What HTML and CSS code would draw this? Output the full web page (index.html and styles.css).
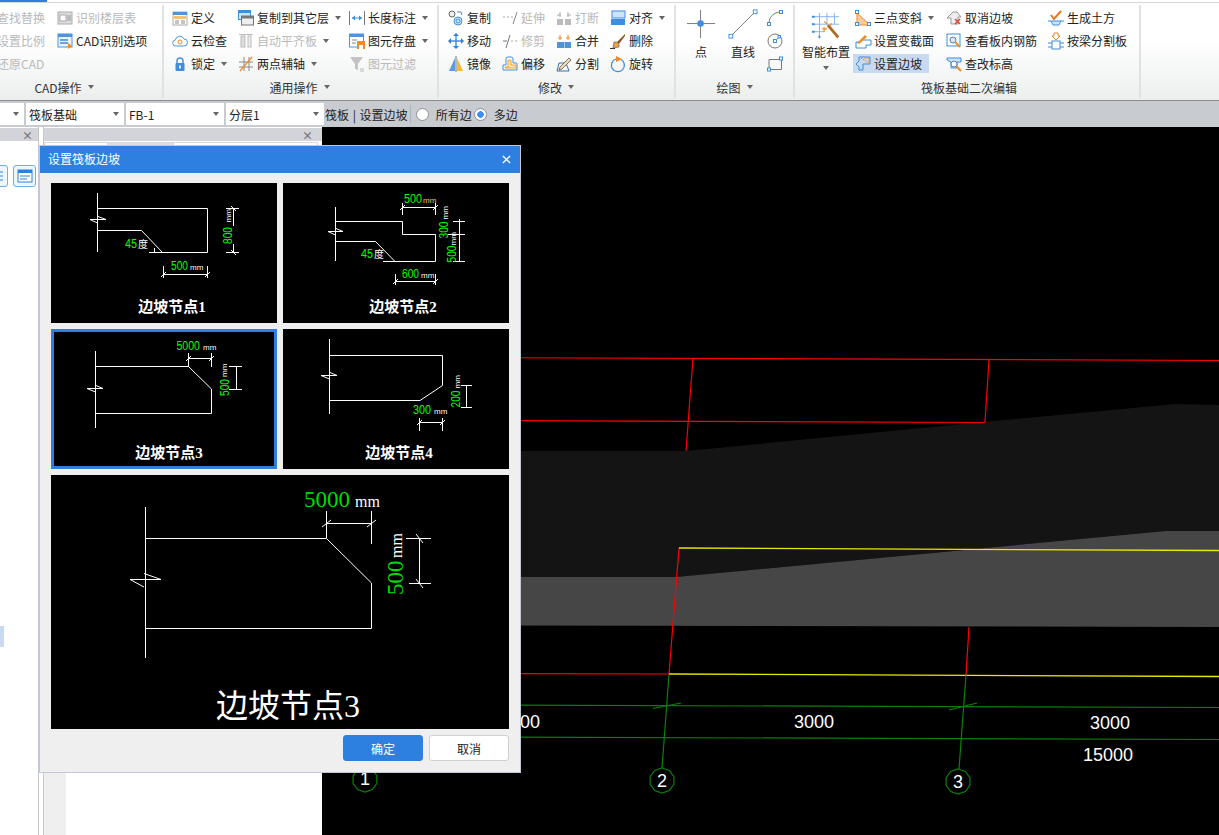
FILE: index.html
```html
<!DOCTYPE html>
<html lang="zh-CN">

<head>
    <meta charset="UTF-8">
    <title>设置筏板边坡</title>
    <link rel="stylesheet" href="styles.css">
</head>

<body>
    <!-- 功能区 -->
    <div class="ribbon">
        <div class="ribbon-top"><span class="ribbon-tab-mark"></span></div>
        <div class="ribbon-groups">
            <div class="group group-cad">
                <div class="group-body">
                    <div class="col col-cad1">
                        <div class="item off"><span class="ic"></span>查找替换</div>
                        <div class="item off"><span class="ic"></span>设置比例</div>
                        <div class="item off"><span class="ic"></span>还原CAD</div>
                    </div>
                    <div class="col">
                        <div class="item off">
                            <svg class="ic" viewBox="0 0 16 16"><rect x="1" y="2" width="14" height="12" fill="#ddd" stroke="#aaa"/><rect x="3" y="5" width="6" height="6" fill="#fff" stroke="#aaa"/><path d="M10 6h4M10 8h4M10 10h4" stroke="#999"/></svg>识别楼层表
                        </div>
                        <div class="item">
                            <svg class="ic" viewBox="0 0 16 16"><rect x="1" y="1" width="14" height="13" fill="#e9f2fb" stroke="#4d94dc"/><rect x="1" y="1" width="14" height="3" fill="#4d94dc"/><path d="M3 7h8M3 10h8" stroke="#6aa5e0" stroke-width="2"/><path d="M11 10l4 3-4 3z" fill="#f08a24"/></svg>CAD识别选项
                        </div>
                    </div>
                </div>
                <div class="group-title">CAD操作<i class="caret"></i></div>
            </div>

            <div class="group group-common">
                <div class="group-body">
                    <div class="col col-c1">
                        <div class="item">
                            <svg class="ic" viewBox="0 0 16 16"><rect x="1" y="2" width="14" height="13" fill="#fff" stroke="#aaa"/><rect x="1" y="2" width="14" height="3" fill="#4d94dc"/><rect x="2" y="6" width="12" height="3" fill="#f7c26b"/><path d="M3 11h4M3 13h4M9 11h4M9 13h4" stroke="#888"/></svg>定义
                        </div>
                        <div class="item">
                            <svg class="ic" viewBox="0 0 16 16"><path d="M4 13a3 3 0 0 1-.6-6A4.500 4.500 0 0 1 12 6a3.500 3.500 0 0 1 0 7z" fill="#fff" stroke="#4d94dc"/><circle cx="8" cy="9" r="2" fill="none" stroke="#f08a24"/></svg>云检查
                        </div>
                        <div class="item">
                            <svg class="ic" viewBox="0 0 16 16"><path d="M5 8V5a3 3 0 0 1 6 0v3" fill="none" stroke="#4d94dc" stroke-width="1.500"/><rect x="3.500" y="7" width="9" height="8" rx="1" fill="#3d8ee0"/><rect x="7.200" y="9.500" width="1.600" height="3" fill="#fff"/></svg>锁定<i class="caret"></i>
                        </div>
                    </div>
                    <div class="col col-c2">
                        <div class="item">
                            <svg class="ic" viewBox="0 0 16 16"><rect x="0.500" y="0.500" width="12" height="9" fill="#cfe3f7" stroke="#3d8ee0"/><rect x="0.500" y="0.500" width="12" height="2.500" fill="#3d8ee0"/><rect x="3.500" y="6" width="12" height="9" fill="#eee" stroke="#777"/><rect x="3.500" y="6" width="12" height="2.500" fill="#777"/></svg>复制到其它层<i class="caret"></i>
                        </div>
                        <div class="item off">
                            <svg class="ic" viewBox="0 0 16 16"><path d="M1 1.500h14" stroke="#bbb"/><rect x="3" y="3" width="4" height="11" fill="#ddd" stroke="#bbb"/><rect x="10" y="3" width="3" height="11" fill="#eee" stroke="#bbb"/></svg>自动平齐板<i class="caret"></i>
                        </div>
                        <div class="item">
                            <svg class="ic" viewBox="0 0 16 16"><path d="M1 6h14M1 11h14M6 1v14M11 1v14" stroke="#8a8a8a"/><path d="M2 15L14 1" stroke="#f08a24" stroke-width="1.200"/></svg>两点辅轴<i class="caret"></i>
                        </div>
                    </div>
                    <div class="col">
                        <div class="item">
                            <svg class="ic" viewBox="0 0 16 16"><path d="M.5 1v14M15.500 1v14" stroke="#777"/><path d="M3 8h10" stroke="#3d8ee0"/><path d="M3 8l3-2.500v5zM13 8l-3-2.500v5z" fill="#3d8ee0"/></svg>长度标注<i class="caret"></i>
                        </div>
                        <div class="item">
                            <svg class="ic" viewBox="0 0 16 16"><rect x="0.500" y="1" width="14" height="13" fill="#fff" stroke="#4d94dc"/><rect x="0.500" y="1" width="14" height="3" fill="#4d94dc"/><path d="M3 7h5M3 10h4" stroke="#888"/><rect x="8" y="8" width="8" height="8" fill="#f08a24"/><rect x="10" y="12" width="4" height="4" fill="#fff"/></svg>图元存盘<i class="caret"></i>
                        </div>
                        <div class="item off">
                            <svg class="ic" viewBox="0 0 16 16"><path d="M1 1h13L9 8v6l-3-1V8z" fill="#c4c4c4"/><path d="M11 13h4M11 15h4" stroke="#bbb"/></svg>图元过滤
                        </div>
                    </div>
                </div>
                <div class="group-title">通用操作<i class="caret"></i></div>
            </div>

            <div class="group group-edit">
                <div class="group-body">
                    <div class="col col-e">
                        <div class="item">
                            <svg class="ic" viewBox="0 0 16 16"><circle cx="4" cy="4" r="3" fill="#eee" stroke="#666"/><path d="M9 2h4l1 3" fill="none" stroke="#3d8ee0"/><circle cx="10" cy="11" r="4" fill="#d3e7fa" stroke="#3d8ee0"/><circle cx="10" cy="11" r="2" fill="none" stroke="#3d8ee0"/></svg>复制
                        </div>
                        <div class="item">
                            <svg class="ic" viewBox="0 0 16 16"><path d="M8 3v10M3 8h10" stroke="#3d8ee0" stroke-width="1.400"/><path d="M8 0l3 3H5zM8 16l3-3H5zM0 8l3-3v6zM16 8l-3-3v6z" fill="#2f80d8"/></svg>移动
                        </div>
                        <div class="item">
                            <svg class="ic" viewBox="0 0 16 16"><path d="M7 2v13H1z" fill="#5a9be0"/><path d="M9 2v13h6z" fill="#f8b72b"/><path d="M8 0v16" stroke="#777"/></svg>镜像
                        </div>
                    </div>
                    <div class="col col-e">
                        <div class="item off">
                            <svg class="ic" viewBox="0 0 16 16"><path d="M1 7h2M5 7h2M9 7h2" stroke="#aaa"/><path d="M11 14L15 2" stroke="#888"/></svg>延伸
                        </div>
                        <div class="item off">
                            <svg class="ic" viewBox="0 0 16 16"><path d="M1 8h4" stroke="#777"/><path d="M4 15L8 2" stroke="#777"/><path d="M9 8h2M13 8h2" stroke="#aaa"/></svg>修剪
                        </div>
                        <div class="item">
                            <svg class="ic" viewBox="0 0 16 16"><path d="M1 14V9h3V3a2 2 0 0 1 2-2h3a2 2 0 0 1 2 2v4h3a1 1 0 0 1 1 1v6z" fill="#fff" stroke="#3d8ee0"/><path d="M3 12v-1h3V4h3v5h5v3z" fill="#fde7b8" stroke="#f0a020"/></svg>偏移
                        </div>
                    </div>
                    <div class="col col-e">
                        <div class="item off">
                            <svg class="ic" viewBox="0 0 16 16"><rect x="1" y="9" width="6" height="6" fill="#bbb"/><rect x="9" y="9" width="6" height="6" fill="#bbb"/><path d="M4 2v5M12 2v5M1 5h4M11 5h4" stroke="#aaa"/></svg>打断
                        </div>
                        <div class="item">
                            <svg class="ic" viewBox="0 0 16 16"><rect x="1" y="9" width="7" height="6" fill="#4d94dc"/><rect x="8.500" y="9" width="6.500" height="6" fill="#4d94dc"/><path d="M4 2v5M12 2v5" stroke="#f08a24"/><path d="M2 5h4M10 5h4" stroke="#f08a24"/></svg>合并
                        </div>
                        <div class="item">
                            <svg class="ic" viewBox="0 0 16 16"><path d="M1 15l2-8h7l3 8z" fill="#f4f8fc" stroke="#3a6ea8"/><path d="M4 11L13 2l2 2-9 9-3 1z" fill="#f6d9a8" stroke="#555" stroke-width=".8"/></svg>分割
                        </div>
                    </div>
                    <div class="col">
                        <div class="item">
                            <svg class="ic" viewBox="0 0 16 16"><rect x="2" y="1" width="13" height="7" fill="#cfe3f7" stroke="#3d8ee0"/><rect x="1" y="9" width="14" height="6" fill="#3d8ee0"/></svg>对齐<i class="caret"></i>
                        </div>
                        <div class="item">
                            <svg class="ic" viewBox="0 0 16 16"><path d="M15 1L7 9l2 2 6-8z" fill="#8a5a2b"/><path d="M4 9l3 0 2 2 0 3-6 1z" fill="#e8a24a" stroke="#555" stroke-width=".6"/><path d="M0 15.500h5" stroke="#333"/></svg>删除
                        </div>
                        <div class="item">
                            <svg class="ic" viewBox="0 0 16 16"><path d="M6 3a6.500 6.500 0 1 0 5 .5" fill="none" stroke="#3d8ee0" stroke-width="1.300"/><path d="M6 0l6 3-6 3z" fill="#f08a24"/></svg>旋转
                        </div>
                    </div>
                </div>
                <div class="group-title">修改<i class="caret"></i></div>
            </div>

            <div class="group group-draw">
                <div class="group-body">
                    <div class="big">
                        <svg class="ic-big" viewBox="0 0 32 32"><path d="M15.500 1v30M1 15.500h30" stroke="#777"/><circle cx="15.500" cy="15.500" r="3.500" fill="#3d8ee0"/></svg>
                        <span>点</span>
                    </div>
                    <div class="big">
                        <svg class="ic-big" viewBox="0 0 32 32"><path d="M3 29L29 3" stroke="#777"/><rect x="1" y="27" width="4" height="4" fill="#fff" stroke="#3d8ee0"/><rect x="27" y="1" width="4" height="4" fill="#fff" stroke="#3d8ee0"/></svg>
                        <span>直线</span>
                    </div>
                    <div class="col-shapes">
                        <svg class="ic" viewBox="0 0 16 16"><path d="M2 13C2 7 7 2 14 2" fill="none" stroke="#777"/><rect x="0.500" y="12.500" width="3" height="3" fill="#fff" stroke="#3d8ee0"/><rect x="12.500" y="0.500" width="3" height="3" fill="#fff" stroke="#3d8ee0"/></svg>
                        <svg class="ic" viewBox="0 0 16 16"><circle cx="8" cy="8" r="7" fill="none" stroke="#777"/><path d="M8 8l4-4" stroke="#777"/><rect x="6.500" y="6.500" width="3" height="3" fill="#fff" stroke="#3d8ee0"/><rect x="11" y="2.500" width="2.500" height="2.500" fill="#fff" stroke="#3d8ee0"/></svg>
                        <svg class="ic" viewBox="0 0 16 16"><path d="M2 3.500h12.500v10H2z" fill="none" stroke="#777"/><rect x="0.500" y="12" width="3" height="3" fill="#fff" stroke="#3d8ee0"/><rect x="12.500" y="1" width="3" height="3" fill="#fff" stroke="#3d8ee0"/></svg>
                    </div>
                </div>
                <div class="group-title">绘图<i class="caret"></i></div>
            </div>

            <div class="group group-slab">
                <div class="group-body">
                    <div class="big big-smart">
                        <svg class="ic-big" viewBox="0 0 32 32"><path d="M1 5h29M1 13h29M1 21h14M9 1v24M17 1v12M25 1v12" stroke="#7fb2e8"/><path d="M1 5h3M1 13h3M1 21h3M9 25v3" stroke="#3d8ee0" stroke-width="2"/><path d="M18 14l11 13" stroke="#b0671f" stroke-width="3"/><path d="M14 10l3 3M20 15l2-3M12 18h5M14 16v5" stroke="#f08a24" stroke-width="1.200"/></svg>
                        <span>智能布置</span>
                        <i class="caret caret-big"></i>
                    </div>
                    <div class="col col-s1">
                        <div class="item">
                            <svg class="ic" viewBox="0 0 16 16"><path d="M2 3v12h13z" fill="#f9c9a0" stroke="#f08a24"/><rect x="0.500" y="0.500" width="3" height="3" fill="#fff" stroke="#3d8ee0"/><rect x="0.500" y="12.500" width="3" height="3" fill="#fff" stroke="#3d8ee0"/><rect x="12.500" y="12.500" width="3" height="3" fill="#fff" stroke="#3d8ee0"/></svg>三点变斜<i class="caret"></i>
                        </div>
                        <div class="item">
                            <svg class="ic" viewBox="0 0 16 16"><path d="M1 15V9h4l3-2h8v5h-5v3z" fill="#fff" stroke="#3d8ee0"/><path d="M2 10l8-8 2 2-8 7z" fill="#f08a24"/></svg>设置变截面
                        </div>
                        <div class="item item-on">
                            <svg class="ic" viewBox="0 0 16 16"><path d="M1 8l3-3V1h11v7H8v6H4V11z" fill="none" stroke="#3d8ee0"/><path d="M6 2l8 5M9 2h5v5" fill="none" stroke="#f08a24" stroke-dasharray="1.500 1"/></svg>设置边坡
                        </div>
                    </div>
                    <div class="col col-s2">
                        <div class="item">
                            <svg class="ic" viewBox="0 0 16 16"><path d="M1 8l6-6h4l4 5H12v7H5V8z" fill="#eee" stroke="#999"/><path d="M9 9l5 5M14 9l-5 5" stroke="#e0422c" stroke-width="1.500"/></svg>取消边坡
                        </div>
                        <div class="item">
                            <svg class="ic" viewBox="0 0 16 16"><rect x="1" y="1" width="13" height="12" fill="#fff" stroke="#3d8ee0"/><circle cx="7" cy="7" r="3" fill="#dbe9f7" stroke="#5a7fa8"/><path d="M9.500 9.500L14 14" stroke="#f08a24" stroke-width="2"/></svg>查看板内钢筋
                        </div>
                        <div class="item">
                            <svg class="ic" viewBox="0 0 16 16"><path d="M1 2h14v4H11v6H5V6L1 4z" fill="#cfe3f7" stroke="#3d8ee0"/><circle cx="8" cy="8" r="3" fill="#fff" stroke="#5a7fa8"/><path d="M10.500 10.500L15 15" stroke="#f08a24" stroke-width="2"/></svg>查改标高
                        </div>
                    </div>
                    <div class="col">
                        <div class="item">
                            <svg class="ic" viewBox="0 0 16 16"><path d="M3 5l3 4 7-8" fill="none" stroke="#f0731e" stroke-width="2"/><path d="M0 11h16M3 11l2 4h6l2-4" fill="#cfe3f7" stroke="#3d8ee0"/></svg>生成土方
                        </div>
                        <div class="item">
                            <svg class="ic" viewBox="0 0 16 16"><path d="M6 0h4v3h2L8 7 4 3h2z" fill="#fff" stroke="#f08a24"/><path d="M0 10h4M12 10h4M0 14h4M12 14h4" stroke="#3d8ee0"/><rect x="4" y="8" width="8" height="8" fill="#fff" stroke="#3d8ee0"/></svg>按梁分割板
                        </div>
                    </div>
                </div>
                <div class="group-title">筏板基础二次编辑</div>
            </div>
        </div>
    </div>

    <!-- 属性条 -->
    <div class="optbar">
        <div class="select select-first"><i class="caret"></i></div>
        <div class="select">筏板基础<i class="caret"></i></div>
        <div class="select">FB-1<i class="caret"></i></div>
        <div class="select">分层1<i class="caret"></i></div>
        <span class="opt-title">筏板 | 设置边坡</span>
        <span class="opt-sep"></span>
        <label class="radio radio-first"><i class="radio-dot"></i>所有边</label>
        <label class="radio radio-on"><i class="radio-dot"></i>多边</label>
    </div>

    <div class="workspace">
        <div class="panel panel-nav">
            <div class="panel-head"><span class="panel-x">×</span></div>
            <div class="nav-tools">
                <span class="tool-btn">
                    <svg viewBox="0 0 16 16"><path d="M2 4h12M2 8h12M2 12h12" stroke="#2f80d8"/></svg>
                </span>
                <span class="tool-btn">
                    <svg viewBox="0 0 16 16"><rect x="1" y="2" width="14" height="12" fill="#fff" stroke="#2f80d8"/><rect x="1" y="2" width="14" height="3" fill="#2f80d8"/><path d="M3 8h10M3 11h7" stroke="#2f80d8"/></svg>
                </span>
            </div>
            <div class="nav-selected"></div>
        </div>
        <div class="panel panel-list">
            <div class="panel-head"><span class="panel-x">×</span></div>
            <div class="tabs">
                <span class="tab"></span>
                <span class="tab tab-grey"></span>
                <span class="tab tab-wide"></span>
            </div>
            <div class="list-body">
                <div class="list-side"></div>
            </div>
        </div>

        <!-- CAD 绘图区 -->
        <svg class="canvas" viewBox="322 127 897 708">
            <defs>
                <polygon id="bubble" points="0,-12.500 7.300,-10.100 11.900,-3.900 11.900,3.900 7.300,10.100 0,12.500 -7.300,10.100 -11.900,3.900 -11.900,-3.900 -7.300,-10.100"/>
            </defs>
            <polygon points="322,451 686,451 984,422 1175,404 1219,405 1219,531 1166,531 676,577 322,577" fill="#141414"/>
            <polygon points="322,577 676,577 1166,531 1219,531 1219,627 322,625" fill="#464646"/>
            <g fill="none" stroke="#f00" stroke-width="1.200">
                <path d="M322 357L1219 360.500"/>
                <path d="M322 420L985 422.500"/>
                <path d="M693 358L686 451"/>
                <path d="M989 360L985 422"/>
                <path d="M679 548L669 674L322 673"/>
                <path d="M969 627L966 675"/>
            </g>
            <g fill="none" stroke="#e8e800" stroke-width="1.300">
                <path d="M679 548L1219 550.500"/>
                <path d="M669 674L1219 676.500"/>
            </g>
            <g fill="none" stroke="#0a800a" stroke-width="1.200">
                <path d="M322 704.500L1219 707.500"/>
                <path d="M322 736.500L1219 739.500"/>
                <path d="M669 674L662 768"/>
                <path d="M966 675L959 769"/>
                <path d="M653 708.500L681 703"/>
                <path d="M949 710L977 703"/>
                <use href="#bubble" x="365" y="779.500"/>
                <use href="#bubble" x="662" y="780.500"/>
                <use href="#bubble" x="958" y="781.500"/>
            </g>
            <g class="cad-text">
                <text x="520" y="728">3000</text>
                <text x="814" y="728">3000</text>
                <text x="1110" y="729">3000</text>
                <text x="1108" y="761">15000</text>
                <text x="365" y="785">1</text>
                <text x="662" y="787">2</text>
                <text x="958" y="788">3</text>
            </g>
        </svg>

        <!-- 弹窗 -->
        <div class="dialog">
            <div class="dialog-head">
                <span class="dialog-title">设置筏板边坡</span>
                <svg class="dialog-x" viewBox="0 0 10 10"><path d="M1 1l8 8M9 1l-8 8" stroke="#fff" stroke-width="1.500"/></svg>
            </div>
            <div class="dialog-body">
                <div class="thumbs">
                    <svg class="thumb" viewBox="0 0 226 140">
                        <path class="ln" d="M46.500 10V69M46.500 25.500H156.500V69.500H98M46.500 47.500H90.500L111.500 69.500M39 36.500H55L47 33.500M39 36.500L46.500 40M103.500 69V65M175 25.500H188M175 69.500H188M182.500 25V43M182.500 61V70M112.500 83V95M156.500 83V95M112.500 91.500H156.500M110 94L115 89M154 94L159 89M180 23L185 28M180 67L185 72"/>
                        <text class="num" x="74" y="65" textLength="12" lengthAdjust="spacingAndGlyphs">45</text><text class="deg" x="87" y="65">度</text>
                        <text class="num" x="120" y="87" textLength="17" lengthAdjust="spacingAndGlyphs">500</text><text class="unit" x="139" y="87">mm</text>
                        <text class="num" transform="translate(181 61) rotate(-90)" textLength="17" lengthAdjust="spacingAndGlyphs">800</text><text class="unit" transform="translate(180 39.500) rotate(-90)">mm</text>
                        <text class="cap" x="121" y="129">边坡节点1</text>
                    </svg>
                    <svg class="thumb" viewBox="0 0 226 140">
                        <path class="ln" d="M52.500 24V78M52.500 38.500H119.500V51.500H152.500V78.500H100M52.500 58.500H92.500L112 78.500M45 48.500H60L53 45.500M45 48.500L52.500 52M176.500 36V79M170 38.500H182M165 51.500H182M170 78.500H182M119.500 20V32M152.500 20V32M119.500 24.500H152.500M112.500 91V102M152.500 91V102M112.500 98.500H152.500M117 27L122 22M150 27L155 22M110 101L115 96M150 101L155 96"/>
                        <text class="num" x="78" y="75" textLength="12" lengthAdjust="spacingAndGlyphs">45</text><text class="deg" x="91" y="75">度</text>
                        <text class="num" x="121" y="20" textLength="18" lengthAdjust="spacingAndGlyphs">500</text><text class="unit unit-o" x="140" y="20">mm</text>
                        <text class="num" x="119" y="95" textLength="17" lengthAdjust="spacingAndGlyphs">600</text><text class="unit" x="138" y="95">mm</text>
                        <text class="num" transform="translate(165 55.500) rotate(-90)" textLength="17" lengthAdjust="spacingAndGlyphs">300</text><text class="unit" transform="translate(165 36.500) rotate(-90)">mm</text>
                        <text class="num" transform="translate(173 79.500) rotate(-90)" textLength="17" lengthAdjust="spacingAndGlyphs">500</text><text class="unit" transform="translate(173 62.500) rotate(-90)">mm</text>
                        <text class="cap" x="120" y="129">边坡节点2</text>
                    </svg>
                    <svg class="thumb thumb-on" viewBox="0 0 226 140">
                        <path class="ln" d="M44.500 22V99M44.500 37.500H137.500L160.500 60V84.500H44.500M36 59.500H52L45 56.500M36 59.500L44.500 63M137.500 24V38M160.500 24V38M137.500 29.500H160.500M185.500 37V60M178 37.500H191M178 60.500H191M135 32L140 27M158 32L163 27"/>
                        <text class="num" x="125.500" y="21" textLength="23.500" lengthAdjust="spacingAndGlyphs">5000</text><text class="unit" x="152" y="21">mm</text>
                        <text class="num" transform="translate(177.500 67) rotate(-90)" textLength="17" lengthAdjust="spacingAndGlyphs">500</text><text class="unit" transform="translate(176 48) rotate(-90)">mm</text>
                        <text class="cap" x="118" y="129">边坡节点3</text>
                    </svg>
                    <svg class="thumb" viewBox="0 0 226 140">
                        <path class="ln" d="M46.500 10V85M46.500 26.500H159.500V56.500L137 71.500H46.500M38 46.500H54L47 43.500M38 46.500L46.500 50M183.500 56.500V78.500M178 56.500H189M178 78.500H189M136.500 89V102M159.500 89V102M136.500 93.500H159.500M134 96L139 91M157 96L162 91"/>
                        <text class="num" x="130" y="85" textLength="18" lengthAdjust="spacingAndGlyphs">300</text><text class="unit" x="151" y="85">mm</text>
                        <text class="num" transform="translate(177 78.500) rotate(-90)" textLength="17" lengthAdjust="spacingAndGlyphs">200</text><text class="unit" transform="translate(176.500 59.500) rotate(-90)">mm</text>
                        <text class="cap" x="116" y="129">边坡节点4</text>
                    </svg>
                    <svg class="thumb-big" viewBox="0 0 458 254">
                        <path class="ln" d="M94.500 32V183M94.500 63.500H275.500L320.500 108V153.500H94.500M79 104.500H110L93 98.500M79 104.500L93 112M275.500 36V63M320.500 36V69M275.500 48.500H320.500M271 52L280 45M316 52L325 45M368.500 63V108M355 63.500H380M358 108.500H380M365 59L372 68M365 104L372 113"/>
                        <text class="num-big" x="253" y="32">5000</text><text class="unit-big" x="304" y="32">mm</text>
                        <text class="num-big" transform="translate(352 120) rotate(-90)">500</text><text class="unit-big" transform="translate(351 83) rotate(-90)">mm</text>
                        <text class="cap-big" x="237" y="242">边坡节点3</text>
                    </svg>
                </div>
                <div class="dialog-foot">
                    <button class="btn btn-primary">确定</button>
                    <button class="btn">取消</button>
                </div>
            </div>
        </div>
    </div>
</body>

</html>
```

FILE: styles.css
```css
* {
    margin: 0;
    padding: 0;
    box-sizing: border-box;
}

html,
body {
    width: 1219px;
    height: 835px;
    overflow: hidden;
}

body {
    display: flex;
    flex-direction: column;
    font-family: "Noto Sans CJK SC", "Liberation Sans", sans-serif;
    font-size: 12px;
    color: #222;
    background-color: #fff;
}

/* 功能区 */
.ribbon {
    height: 101px;
    flex: none;
    background: linear-gradient(#fff 40%, #eceeee 100%);
    border-bottom: 1px solid #8b8d90;
    overflow: hidden;
}

.ribbon-top {
    height: 3px;
    background-color: #fff;
    border-bottom: 1px solid #d4d6d8;
}

.ribbon-tab-mark {
    display: block;
    width: 47px;
    height: 2px;
    background-color: #2e80e0;
}

.ribbon-groups {
    display: flex;
    height: 93px;
    margin-top: 2px;
}

.group {
    display: flex;
    flex-direction: column;
    flex: none;
    border-right: 2px solid #dfe1e2;
}

.group-cad {
    width: 164px;
}

.group-cad .group-title {
    padding-right: 34px;
}

.group-common {
    width: 275px;
    padding-left: 8px;
}

.group-common .group-title {
    padding-right: 10px;
}

.group-edit {
    width: 237px;
    padding-left: 9px;
}

.group-edit .group-title {
    padding-right: 10px;
}

.group-draw {
    width: 119px;
    padding-left: 4px;
}

.group-draw .group-title {
    padding-right: 4px;
}

.group-slab {
    width: 346px;
}

.group-slab .group-title {
    padding-left: 4px;
}

.group-body {
    display: flex;
    height: 72px;
    padding-top: 1px;
}

.group-title {
    display: flex;
    align-items: center;
    justify-content: center;
    height: 18px;
    margin-top: 1px;
    color: #333;
}

.col {
    flex: none;
}

.col-cad1 {
    width: 79px;
    margin-left: -22px;
}

.col-c1 {
    width: 66px;
}

.col-c2 {
    width: 111px;
}

.col-e {
    width: 54px;
}

.col-s1 {
    width: 91px;
}

.col-s2 {
    width: 102px;
}

.col-shapes {
    display: flex;
    flex-direction: column;
    gap: 7px;
    padding: 4px 0 0 3px;
}

.item {
    display: flex;
    align-items: center;
    height: 23px;
    white-space: nowrap;
}

.item.off {
    color: #b9b9b9;
}

.item-on {
    width: 76px;
    height: 19px;
    margin-top: 2px;
    margin-left: -2px;
    padding-left: 2px;
    background-color: #c8daf2;
}

.ic {
    display: block;
    flex: none;
    width: 16px;
    height: 16px;
    margin-right: 3px;
    overflow: visible;
}

.ic-big {
    display: block;
    width: 30px;
    height: 30px;
    margin: 3px auto 4px;
}

.big {
    flex: none;
    width: 42px;
    text-align: center;
    white-space: nowrap;
}

.big-smart {
    width: 60px;
    padding-left: 2px;
}

.big-smart .ic-big {
    margin-top: 6px;
    margin-bottom: 1px;
}

.caret {
    display: inline-block;
    flex: none;
    width: 0;
    height: 0;
    margin-left: 6px;
    border-left: 3.5px solid transparent;
    border-right: 3.5px solid transparent;
    border-top: 4px solid #666;
}

.caret-big {
    display: block;
    margin: 6px auto 0;
}

/* 属性条 */
.optbar {
    display: flex;
    align-items: center;
    height: 26px;
    flex: none;
    gap: 2px;
    background-color: #c8cbcf;
}

.select {
    display: flex;
    align-items: center;
    justify-content: space-between;
    width: 98px;
    height: 22px;
    padding: 0 5px 0 3px;
    background-color: #fff;
    font-size: 12px;
}

.select-first {
    width: 24px;
    justify-content: flex-end;
}

.opt-title {
    margin-left: -1px;
    word-spacing: 1px;
    white-space: nowrap;
}

.opt-sep {
    width: 1px;
    height: 18px;
    background-color: #aeb1b5;
}

.radio {
    display: flex;
    align-items: center;
    white-space: nowrap;
}

.radio-first {
    margin-left: 3px;
}

.radio-dot {
    width: 13px;
    height: 13px;
    margin-right: 7px;
    background-color: #fff;
    border: 1px solid #8e9196;
    border-radius: 50%;
}

.radio-on .radio-dot {
    background: radial-gradient(circle, #3d8ef0 0 3px, #fff 3.5px);
}

/* 左侧面板 */
.workspace {
    position: relative;
    display: flex;
    flex: 1;
    min-height: 0;
}

.panel {
    position: relative;
    flex: none;
    overflow: hidden;
}

.panel-nav {
    width: 39px;
    border-right: 1px solid #c8c8c8;
}

.panel-list {
    width: 279px;
    margin-left: 4px;
    border-left: 1px solid #c8c8c8;
}

.panel-head {
    display: flex;
    align-items: center;
    justify-content: flex-end;
    height: 13px;
    margin-top: 1px;
    padding-right: 5px;
    background-color: #d2d4d9;
}

.panel-list .panel-head {
    padding-right: 9px;
}

.panel-x {
    font-size: 11px;
    font-weight: bold;
    line-height: 12px;
    color: #777;
}

.nav-tools {
    display: flex;
    gap: 5px;
    margin: 24px 0 0 -15px;
}

.tool-btn {
    display: flex;
    align-items: center;
    justify-content: center;
    flex: none;
    width: 23px;
    height: 22px;
    background-color: #eef6fd;
    border: 1px solid #6ab0f0;
    border-radius: 3px;
}

.tool-btn svg {
    width: 16px;
    height: 16px;
}

.nav-selected {
    position: absolute;
    top: 499px;
    left: 0;
    width: 4px;
    height: 21px;
    background-color: #c8daf2;
}

.tabs {
    display: flex;
    height: 30px;
    margin-top: 1px;
}

.tab {
    width: 64px;
    background-color: #fff;
    border: 1px solid #d8d8d8;
}

.tab-grey {
    width: 65px;
    background-color: #dddddd;
}

.tab-wide {
    width: 145px;
}

.list-body {
    height: 100%;
}

.list-side {
    width: 22px;
    height: 100%;
    background-color: #efefef;
}

/* 绘图区 */
.canvas {
    display: block;
    flex: none;
    width: 897px;
    height: 708px;
    background-color: #000;
}

.cad-text text {
    font-family: "Liberation Sans", sans-serif;
    font-size: 18px;
    fill: #fff;
    text-anchor: middle;
}

/* 弹窗 */
.dialog {
    position: absolute;
    top: 18px;
    left: 38px;
    display: flex;
    flex-direction: column;
    width: 483px;
    height: 628px;
    background-color: #efefef;
    border: 1px solid #c3c8d6;
    border-left-width: 2px;
}

.dialog-head {
    display: flex;
    align-items: center;
    justify-content: space-between;
    flex: none;
    height: 27px;
    padding: 0 9px 0 8px;
    background-color: #2e80e0;
    color: #fff;
}

.dialog-title {
    padding-bottom: 2px;
}

.dialog-x {
    width: 9px;
    height: 9px;
}

.dialog-body {
    padding: 10px 11px 0;
}

.thumbs {
    display: grid;
    grid-template-columns: 226px 226px;
    grid-template-rows: 140px 140px 254px;
    gap: 6px;
}

.thumb,
.thumb-big {
    display: block;
    width: 100%;
    height: 100%;
    background-color: #000;
}

.thumb-big {
    grid-column: 1 / 3;
}

.thumb-on {
    outline: 3px solid #2e80e0;
    outline-offset: -3px;
}

.ln {
    fill: none;
    stroke: #fff;
    stroke-width: 1;
}

.num,
.num-big {
    font-family: "Liberation Sans", sans-serif;
    font-size: 12.500px;
    fill: #0f0;
}

.num-big {
    font-family: "Liberation Serif", serif;
    font-size: 23px;
    fill: #00dc00;
}

.unit {
    font-family: "Liberation Sans", sans-serif;
    font-size: 8px;
    fill: #fff;
}

.deg {
    font-family: "Noto Sans CJK SC", sans-serif;
    font-size: 10px;
    fill: #fff;
}

.unit-o {
    fill: #f7c26b;
}

.unit-big {
    font-family: "Liberation Serif", serif;
    font-size: 16px;
    fill: #fff;
}

.cap,
.cap-big {
    font-family: "Liberation Serif", "Noto Sans CJK SC", serif;
    font-size: 15px;
    font-weight: bold;
    fill: #fff;
    text-anchor: middle;
}

.cap-big {
    font-size: 32px;
    font-weight: normal;
}

.dialog-foot {
    display: flex;
    justify-content: flex-end;
    gap: 6px;
    margin-top: 6px;
}

.btn {
    width: 80px;
    height: 26px;
    font-family: inherit;
    font-size: 12px;
    color: #222;
    background-color: #fff;
    border: 1px solid #d0d0d0;
    border-radius: 3px;
}

.btn-primary {
    color: #fff;
    background-color: #2e80e0;
    border-color: #2e80e0;
}
```
